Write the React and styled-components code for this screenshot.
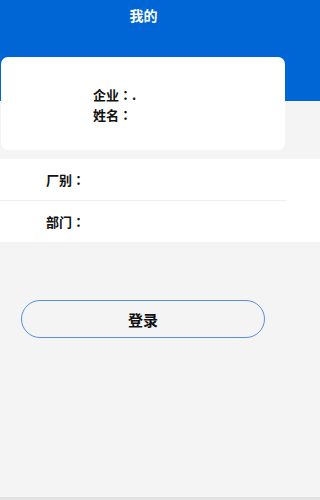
import React from "react";
import styled, { createGlobalStyle } from "styled-components";

const Global = createGlobalStyle`
  html, body { margin: 0; padding: 0; background: #f4f4f4; }
  body { font-family: "Noto Sans CJK SC", "Liberation Sans", sans-serif; }
  * { box-sizing: border-box; }
`;

const Page = styled.div`
  min-height: 500px;
  display: flex;
  flex-direction: column;
  background: #f4f4f4;
  border-bottom: 3px solid #e2e2e2;
`;

const Top = styled.header`
  background: linear-gradient(#0066d6 0, #0066d6 101px, transparent 101px);
  padding-top: 7px;
`;

const Title = styled.h1`
  margin: 0;
  width: 287px;
  height: 50px;
  text-align: center;
  color: #fff;
  font-size: 14px;
  font-weight: 700;
  line-height: 16px;
`;

const Card = styled.section`
  margin-left: 1px;
  width: 284px;
  height: 93px;
  background: #fff;
  border-radius: 7px;
  padding: 28px 0 0 92px;
`;

const InfoLine = styled.div`
  font-size: 13px;
  font-weight: 700;
  line-height: 20px;
  color: #111;
`;

const Colon = styled.span`
  font-family: "Noto Sans CJK TC", "Noto Sans CJK SC", sans-serif;
`;

const List = styled.div`
  margin-top: 9px;
  background: #fff;
  display: flex;
  flex-direction: column;
`;

const Row = styled.div`
  height: 41px;
  display: flex;
  align-items: center;
  padding-left: 46px;
  font-size: 13px;
  font-weight: 700;
  color: #111;
`;

const Divider = styled.div`
  height: 1px;
  width: 287px;
  background: #f0f0f0;
`;

const LoginButton = styled.button`
  margin: 58px 0 0 21px;
  width: 244px;
  height: 38px;
  border: 1.5px solid #5a8fd8;
  border-radius: 19px;
  background: transparent;
  font-family: inherit;
  font-size: 15px;
  font-weight: 700;
  color: #111;
  cursor: pointer;
`;

export default function App() {
  return (
    <>
      <Global />
      <Page>
        <Top>
          <Title>我的</Title>
          <Card>
            <InfoLine>企业<Colon>：</Colon>.</InfoLine>
            <InfoLine>姓名<Colon>：</Colon></InfoLine>
          </Card>
        </Top>
        <List>
          <Row>厂别<Colon>：</Colon></Row>
          <Divider />
          <Row>部门<Colon>：</Colon></Row>
        </List>
        <LoginButton>登录</LoginButton>
      </Page>
    </>
  );
}
